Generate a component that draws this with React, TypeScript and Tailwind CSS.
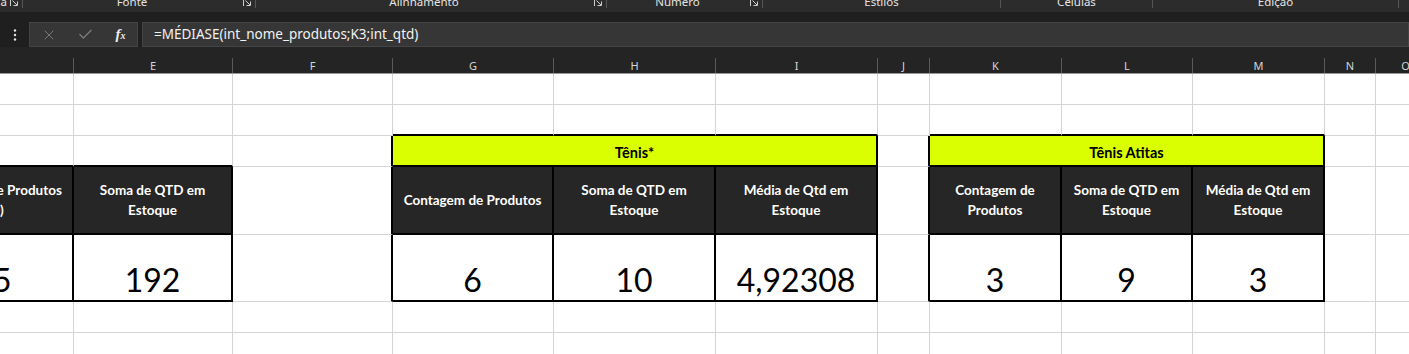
import React from 'react';
import { X, Check } from 'lucide-react';

const UI_FONT = "font-['Noto_Sans',sans-serif]";
const CELL_FONT = "font-['Lato','Open_Sans',sans-serif]";

const Launcher = () => (
    <svg width="8" height="8" viewBox="0 0 8 8" fill="none" stroke="#cfcfcf" strokeWidth="1" className="shrink-0 -mt-[1px]">
        <path d="M0.5 0v7" />
        <path d="M2.5 1.5l4.5 4.5M7.5 2.5v4H3.5" />
    </svg>
);

const RibbonGroup: React.FC<{ w: string; label?: string; launcher?: boolean; right?: boolean }> = ({ w, label, launcher, right }) => (
    <div className={`${w} h-full flex items-start shrink-0`}>
        <div className={`flex-1 min-w-0 flex overflow-hidden whitespace-nowrap ${right ? 'justify-end pr-[1px]' : 'justify-center'}`}>
            <span className="text-[11.5px] leading-[12px] -mt-[4px] text-[#e4e4e4]">{label}</span>
        </div>
        {launcher && <div className="pr-[4px] pl-[2px]"><Launcher /></div>}
        <div className="h-[8px] border-r border-[#555555]" />
    </div>
);

const COLS = ['D', 'E', 'F', 'G', 'H', 'I', 'J', 'K', 'L', 'M', 'N', 'O'];
const GRID = 'grid grid-cols-[160px_159px_160px_161px_162px_162px_52px_132px_131px_132px_51px_60px] -ml-[86px]';

const plain = 'bg-white border-r border-b border-[#d4d4d4]';
const blackBottom = 'bg-white border-r border-r-[#d4d4d4] border-b-2 border-b-black';
const blackRight = 'bg-white border-r-2 border-r-black border-b border-b-[#d4d4d4]';
const head = `bg-[#262626] border-r-2 border-b-2 border-black flex items-center justify-center text-center text-white font-bold text-[13.5px] leading-[20px] ${CELL_FONT}`;
const title = `bg-[#d9ff00] border-r-2 border-b-2 border-black flex items-end justify-center pb-[3px] text-black font-bold text-[14.5px] leading-[18px] ${CELL_FONT}`;
const value = `bg-white border-r-2 border-b-2 border-black flex items-end justify-center pb-[4px] text-black text-[32px] leading-none ${CELL_FONT}`;

const Plain = ({ n }: { n: number }) => (
    <>{Array.from({ length: n }).map((_, i) => <div key={i} className={plain} />)}</>
);

export default function App() {
    return (
        <div className={`w-[1409px] h-[354px] overflow-hidden bg-[#1f1f1f] ${UI_FONT}`}>
            {/* ribbon group labels */}
            <div className="h-[12px] bg-[#2c2c2c] flex overflow-hidden">
                <RibbonGroup w="w-[23px]" label="Área de Transferência" launcher right />
                <RibbonGroup w="w-[233px]" label="Fonte" launcher />
                <RibbonGroup w="w-[351px]" label="Alinhamento" launcher />
                <RibbonGroup w="w-[156px]" label="Número" launcher />
                <RibbonGroup w="w-[238px]" label="Estilos" />
                <RibbonGroup w="w-[152px]" label="Células" />
                <RibbonGroup w="w-[246px]" label="Edição" />
                <div className="w-[10px]" />
            </div>
            <div className="h-[10px] bg-[#1f1f1f]" />

            {/* formula bar */}
            <div className="h-[25px] flex bg-[#1f1f1f]">
                <div className="w-[29px] flex items-center justify-center">
                    <svg width="4" height="12" viewBox="0 0 4 12" fill="#e6e6e6">
                        <circle cx="2" cy="1.5" r="1.2" />
                        <circle cx="2" cy="6" r="1.2" />
                        <circle cx="2" cy="10.5" r="1.2" />
                    </svg>
                </div>
                <div className="w-[109px] bg-[#363636] border border-[#444444] flex items-center">
                    <div className="w-[37px] flex justify-center pl-[1px]"><X size={16} strokeWidth={1.4} color="#7d7d7d" /></div>
                    <div className="w-[37px] flex justify-center"><Check size={17} strokeWidth={1.7} color="#7d7d7d" /></div>
                    <div className="w-[33px] flex justify-center items-baseline text-[#ededed]">
                        <span className="font-['Liberation_Serif',serif] italic font-bold text-[15px] leading-none">f</span>
                        <span className="font-['Liberation_Serif',serif] italic font-bold text-[10px] leading-none">x</span>
                    </div>
                </div>
                <div className="w-[4px]" />
                <div className="flex-1 bg-[#363636] border border-[#444444] flex items-center pl-[11px]">
                    <span className="text-[13.5px] text-[#f2f2f2] whitespace-nowrap">=MÉDIASE(int_nome_produtos;K3;int_qtd)</span>
                </div>
            </div>

            {/* column headers */}
            <div className="h-[27px] bg-[#242424] border-b border-[#9a9a9a] overflow-hidden">
                <div className={GRID}>
                    {COLS.map((c) => (
                        <div key={c} className="h-[26px] flex flex-col">
                            <div className="h-[11px]" />
                            <div className="h-[15px] border-r border-[#5a5a5a] flex items-center justify-center text-[11px] leading-none text-[#d6d6d6]">{c}</div>
                        </div>
                    ))}
                </div>
            </div>

            {/* cells */}
            <div className="overflow-hidden bg-white">
                <div className={`${GRID} grid-rows-[31px_31px_31px_68px_67px_31px_31px]`}>
                    {/* row 1 */}
                    <Plain n={12} />

                    {/* row 2 */}
                    <Plain n={3} />
                    <div className={blackBottom} />
                    <div className={blackBottom} />
                    <div className={blackBottom} />
                    <div className={plain} />
                    <div className={blackBottom} />
                    <div className={blackBottom} />
                    <div className={blackBottom} />
                    <Plain n={2} />

                    {/* row 3 */}
                    <div className={blackBottom} />
                    <div className={blackBottom} />
                    <div className={blackRight} />
                    <div className={`${title} col-span-3`}>Tênis*</div>
                    <div className={blackRight} />
                    <div className={`${title} col-span-3`}>Tênis Atitas</div>
                    <Plain n={2} />

                    {/* row 4 */}
                    <div className={head}>Contagem de Produtos<br />(ID)</div>
                    <div className={head}>Soma de QTD em<br />Estoque</div>
                    <div className={blackRight} />
                    <div className={head}>Contagem de Produtos</div>
                    <div className={head}>Soma de QTD em<br />Estoque</div>
                    <div className={head}>Média de Qtd em<br />Estoque</div>
                    <div className={blackRight} />
                    <div className={head}>Contagem de<br />Produtos</div>
                    <div className={head}>Soma de QTD em<br />Estoque</div>
                    <div className={head}>Média de Qtd em<br />Estoque</div>
                    <Plain n={2} />

                    {/* row 5 */}
                    <div className={value}>45</div>
                    <div className={value}>192</div>
                    <div className={blackRight} />
                    <div className={value}>6</div>
                    <div className={value}>10</div>
                    <div className={value}>4,92308</div>
                    <div className={blackRight} />
                    <div className={value}>3</div>
                    <div className={value}>9</div>
                    <div className={value}>3</div>
                    <Plain n={2} />

                    {/* rows 6-7 */}
                    <Plain n={24} />
                </div>
            </div>
        </div>
    );
}
